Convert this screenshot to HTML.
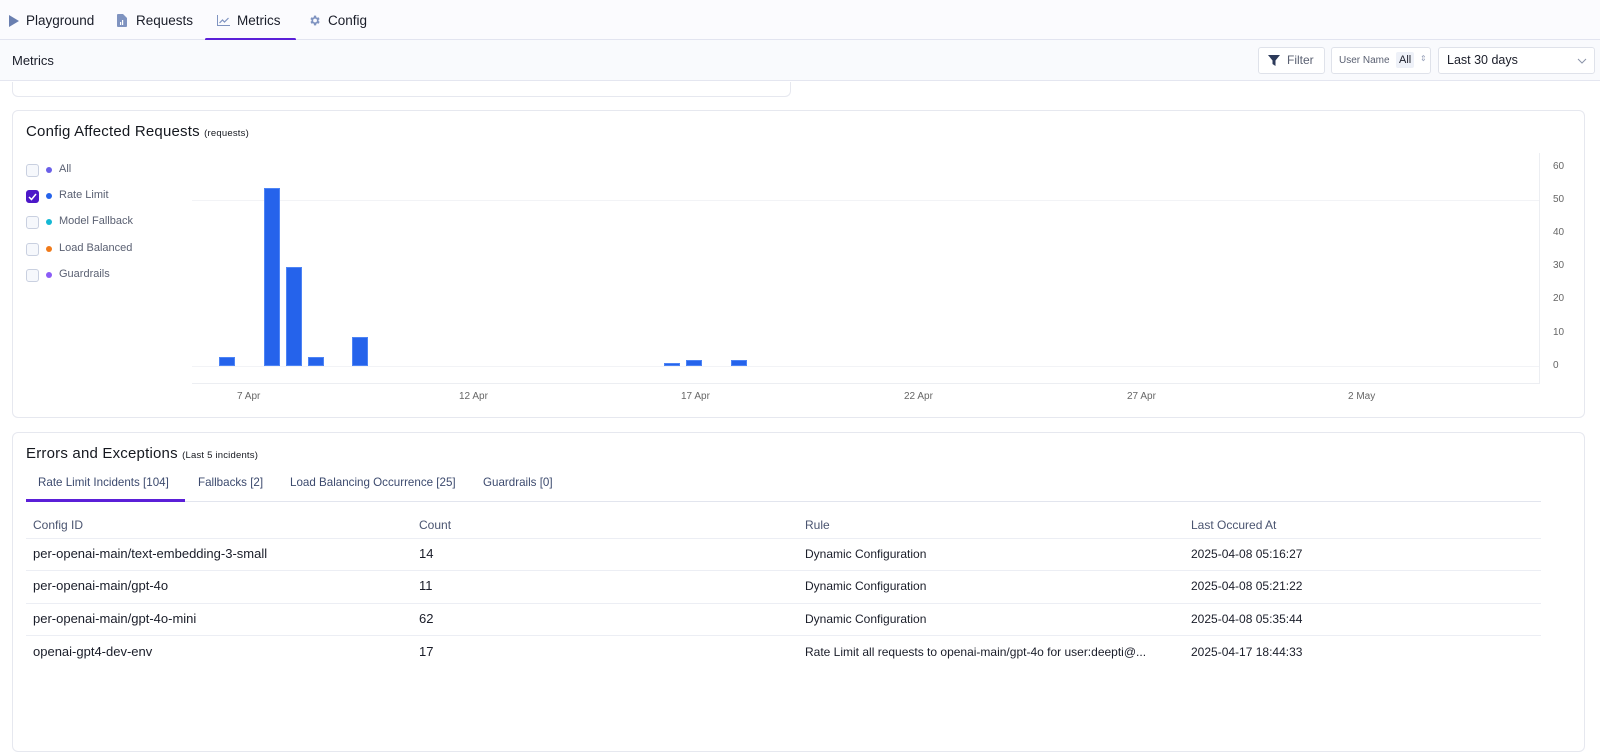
<!DOCTYPE html>
<html><head><meta charset="utf-8"><style>
*{box-sizing:border-box;margin:0;padding:0}
body{width:1600px;height:735px;overflow:hidden;background:#fff;font-family:"Liberation Sans",sans-serif;color:#1f2330;position:relative}
.a{position:absolute;white-space:nowrap}
.nav{position:absolute;left:0;top:0;width:1600px;height:40px;background:#fbfbfe;border-bottom:1px solid #e2e4f0}
.sub{position:absolute;left:0;top:40px;width:1600px;height:41px;background:#f9fafd;border-bottom:1px solid #e4e6f0}
.navt{font-size:13.5px;top:13px;color:#1a1d29}
.card{position:absolute;background:#fff;border:1px solid #e6e8ef;border-radius:6px}
.btn{position:absolute;top:47px;height:27px;border:1px solid #dfe2ea;border-radius:3px;background:#fff}
.leg{font-size:11px;color:#5a6072}
.cb{position:absolute;left:26px;width:13px;height:13px;border:1px solid #c9d0e0;border-radius:3px;background:#f6f8fc}
.dot{position:absolute;left:46px;width:6px;height:6px;border-radius:50%}
.bar{position:absolute;background:#2563eb;border:1px solid #4d84f5;width:16px}
.yl{font-size:10px;color:#666;left:1553px}
.xl{font-size:10px;color:#666;top:391px}
.th{font-size:12px;color:#4a5470;top:518px}
.td{font-size:12px;color:#1a1d29}
.w{font-size:13px}
.hl{position:absolute;left:26px;width:1515px;height:1px;background:#eceef4}
.tab{font-size:11.6px;color:#3c4a6e;top:476px}
</style></head><body>
<div class="nav"></div>
<svg class="a" style="left:9px;top:15px" width="10" height="12"><path d="M0 0L10 6L0 12Z" fill="#6a7fb0"/></svg>
<div class="a navt" style="left:26px">Playground</div>
<svg class="a" style="left:117px;top:14px" width="10" height="13"><path d="M0 1Q0 0 1 0H6L10 4V12Q10 13 9 13H1Q0 13 0 12Z" fill="#7f93c0"/><rect x="3" y="8" width="1.2" height="3" fill="#fff"/><rect x="5" y="6" width="1.2" height="5" fill="#fff"/></svg>
<div class="a navt" style="left:136px">Requests</div>
<svg class="a" style="left:217px;top:15px" width="13" height="11"><path d="M0.5 0V10.5H13" stroke="#7f93c0" fill="none"/><path d="M2.5 8L5.5 5L7.5 7L11.5 3" stroke="#7f93c0" fill="none" stroke-width="1.2"/></svg>
<div class="a navt" style="left:237px">Metrics</div>
<div class="a" style="left:205px;top:38px;width:91px;height:3px;background:#5b1fd8;border-radius:2px"></div>
<svg class="a" style="left:308px;top:14px" width="13" height="13" viewBox="0 0 24 24"><path fill="#7f93c0" d="M19.4 13a7.5 7.5 0 000-2l2.1-1.6-2-3.5-2.5 1a7.3 7.3 0 00-1.7-1L15 3h-4l-.4 2.9a7.3 7.3 0 00-1.7 1l-2.5-1-2 3.5L6.6 11a7.5 7.5 0 000 2l-2.1 1.6 2 3.5 2.5-1a7.3 7.3 0 001.7 1L11 21h4l.4-2.9a7.3 7.3 0 001.7-1l2.5 1 2-3.5zM13 15.5a3.5 3.5 0 110-7 3.5 3.5 0 010 7z"/></svg>
<div class="a navt" style="left:328px">Config</div>

<div class="sub"></div>
<div class="a" style="left:12px;top:53px;font-size:13px;color:#1a1d29">Metrics</div>
<div class="btn" style="left:1258px;width:67px"></div>
<svg class="a" style="left:1268px;top:55px" width="12" height="11"><path d="M0 0H12L7.5 5.5V11L4.5 9V5.5Z" fill="#2c3a5a"/></svg>
<div class="a" style="left:1287px;top:53px;font-size:12px;color:#5a6072">Filter</div>
<div class="btn" style="left:1331px;width:100px"></div>
<div class="a" style="left:1339px;top:55px;font-size:10px;color:#5a6072">User Name</div>
<div class="a" style="left:1396px;top:52px;width:18px;height:16px;background:#eef1f8;border-radius:2px"></div>
<div class="a" style="left:1399px;top:54px;font-size:11px;color:#1a1d29">All</div>
<div class="a" style="left:1420px;top:54px;font-size:8px;color:#9aa3bb">⇕</div>
<div class="btn" style="left:1438px;width:157px"></div>
<div class="a" style="left:1447px;top:53px;font-size:12.5px;color:#1a1d29">Last 30 days</div>
<svg class="a" style="left:1577px;top:58px" width="10" height="6"><path d="M1 1L5 5L9 1" stroke="#8a93a8" fill="none"/></svg>

<div class="card" style="left:12px;top:82px;width:779px;height:15px;border-top:none;border-radius:0 0 6px 6px"></div>

<div class="card" style="left:12px;top:110px;width:1573px;height:308px"></div>
<div class="a" style="left:26px;top:123px;font-size:15px;color:#15181f;letter-spacing:.2px">Config Affected Requests <span style="font-size:9.5px">(requests)</span></div>
<div class="cb" style="top:164px"></div><div class="dot" style="top:167px;background:#6a5fe8"></div><div class="a leg" style="left:59px;top:163px">All</div>
<div class="cb" style="top:190px;background:#4c17c8;border-color:#4c17c8"></div><svg class="a" style="left:28px;top:193px" width="9" height="8"><path d="M1 4L3.5 6.5L8 1" stroke="#fff" stroke-width="1.5" fill="none"/></svg><div class="dot" style="top:193px;background:#2563eb"></div><div class="a leg" style="left:59px;top:189px">Rate Limit</div>
<div class="cb" style="top:216px"></div><div class="dot" style="top:219px;background:#14b8d4"></div><div class="a leg" style="left:59px;top:215px">Model Fallback</div>
<div class="cb" style="top:243px"></div><div class="dot" style="top:246px;background:#f07a1a"></div><div class="a leg" style="left:59px;top:242px">Load Balanced</div>
<div class="cb" style="top:269px"></div><div class="dot" style="top:272px;background:#8b5cf6"></div><div class="a leg" style="left:59px;top:268px">Guardrails</div>

<div class="a" style="left:192px;top:200px;width:1348px;height:1px;background:#f2f3f6"></div>
<div class="a" style="left:192px;top:366px;width:1348px;height:1px;background:#f2f3f6"></div>
<div class="a" style="left:192px;top:383px;width:1348px;height:1px;background:#eceef2"></div>
<div class="a" style="left:1539px;top:153px;width:1px;height:231px;background:#eceef2"></div>
<div class="a yl" style="top:161px">60</div><div class="a yl" style="top:194px">50</div><div class="a yl" style="top:227px">40</div><div class="a yl" style="top:260px">30</div><div class="a yl" style="top:293px">20</div><div class="a yl" style="top:327px">10</div><div class="a yl" style="top:360px">0</div>
<div class="bar" style="left:219px;top:357px;height:9px"></div>
<div class="bar" style="left:264px;top:188px;height:178px"></div>
<div class="bar" style="left:286px;top:267px;height:99px"></div>
<div class="bar" style="left:308px;top:357px;height:9px"></div>
<div class="bar" style="left:352px;top:337px;height:29px"></div>
<div class="bar" style="left:664px;top:363px;height:3px"></div>
<div class="bar" style="left:686px;top:360px;height:6px"></div>
<div class="bar" style="left:731px;top:360px;height:6px"></div>
<div class="a xl" style="left:237px">7 Apr</div><div class="a xl" style="left:459px">12 Apr</div><div class="a xl" style="left:681px">17 Apr</div><div class="a xl" style="left:904px">22 Apr</div><div class="a xl" style="left:1127px">27 Apr</div><div class="a xl" style="left:1348px">2 May</div>

<div class="card" style="left:12px;top:432px;width:1573px;height:320px"></div>
<div class="a" style="left:26px;top:445px;font-size:15px;color:#15181f;letter-spacing:.2px">Errors and Exceptions <span style="font-size:9.5px">(Last 5 incidents)</span></div>
<div class="a tab" style="left:38px">Rate Limit Incidents [104]</div>
<div class="a tab" style="left:198px">Fallbacks [2]</div>
<div class="a tab" style="left:290px">Load Balancing Occurrence [25]</div>
<div class="a tab" style="left:483px">Guardrails [0]</div>
<div class="a" style="left:26px;top:501px;width:1515px;height:1px;background:#e2e5ee"></div>
<div class="a" style="left:26px;top:499px;width:159px;height:3px;background:#5b1fd8"></div>
<div class="a th" style="left:33px">Config ID</div><div class="a th" style="left:419px">Count</div><div class="a th" style="left:805px">Rule</div><div class="a th" style="left:1191px">Last Occured At</div>
<div class="hl" style="top:538px"></div><div class="hl" style="top:570px"></div><div class="hl" style="top:603px"></div><div class="hl" style="top:635px"></div>
<div class="a td w" style="left:33px;top:546px">per-openai-main/text-embedding-3-small</div><div class="a td w" style="left:419px;top:546px">14</div><div class="a td" style="left:805px;top:547px">Dynamic Configuration</div><div class="a td" style="left:1191px;top:547px">2025-04-08 05:16:27</div>
<div class="a td w" style="left:33px;top:578px">per-openai-main/gpt-4o</div><div class="a td w" style="left:419px;top:578px">11</div><div class="a td" style="left:805px;top:579px">Dynamic Configuration</div><div class="a td" style="left:1191px;top:579px">2025-04-08 05:21:22</div>
<div class="a td w" style="left:33px;top:611px">per-openai-main/gpt-4o-mini</div><div class="a td w" style="left:419px;top:611px">62</div><div class="a td" style="left:805px;top:612px">Dynamic Configuration</div><div class="a td" style="left:1191px;top:612px">2025-04-08 05:35:44</div>
<div class="a td w" style="left:33px;top:644px">openai-gpt4-dev-env</div><div class="a td w" style="left:419px;top:644px">17</div><div class="a td" style="left:805px;top:645px">Rate Limit all requests to openai-main/gpt-4o for user:deepti@...</div><div class="a td" style="left:1191px;top:645px">2025-04-17 18:44:33</div>
</body></html>
